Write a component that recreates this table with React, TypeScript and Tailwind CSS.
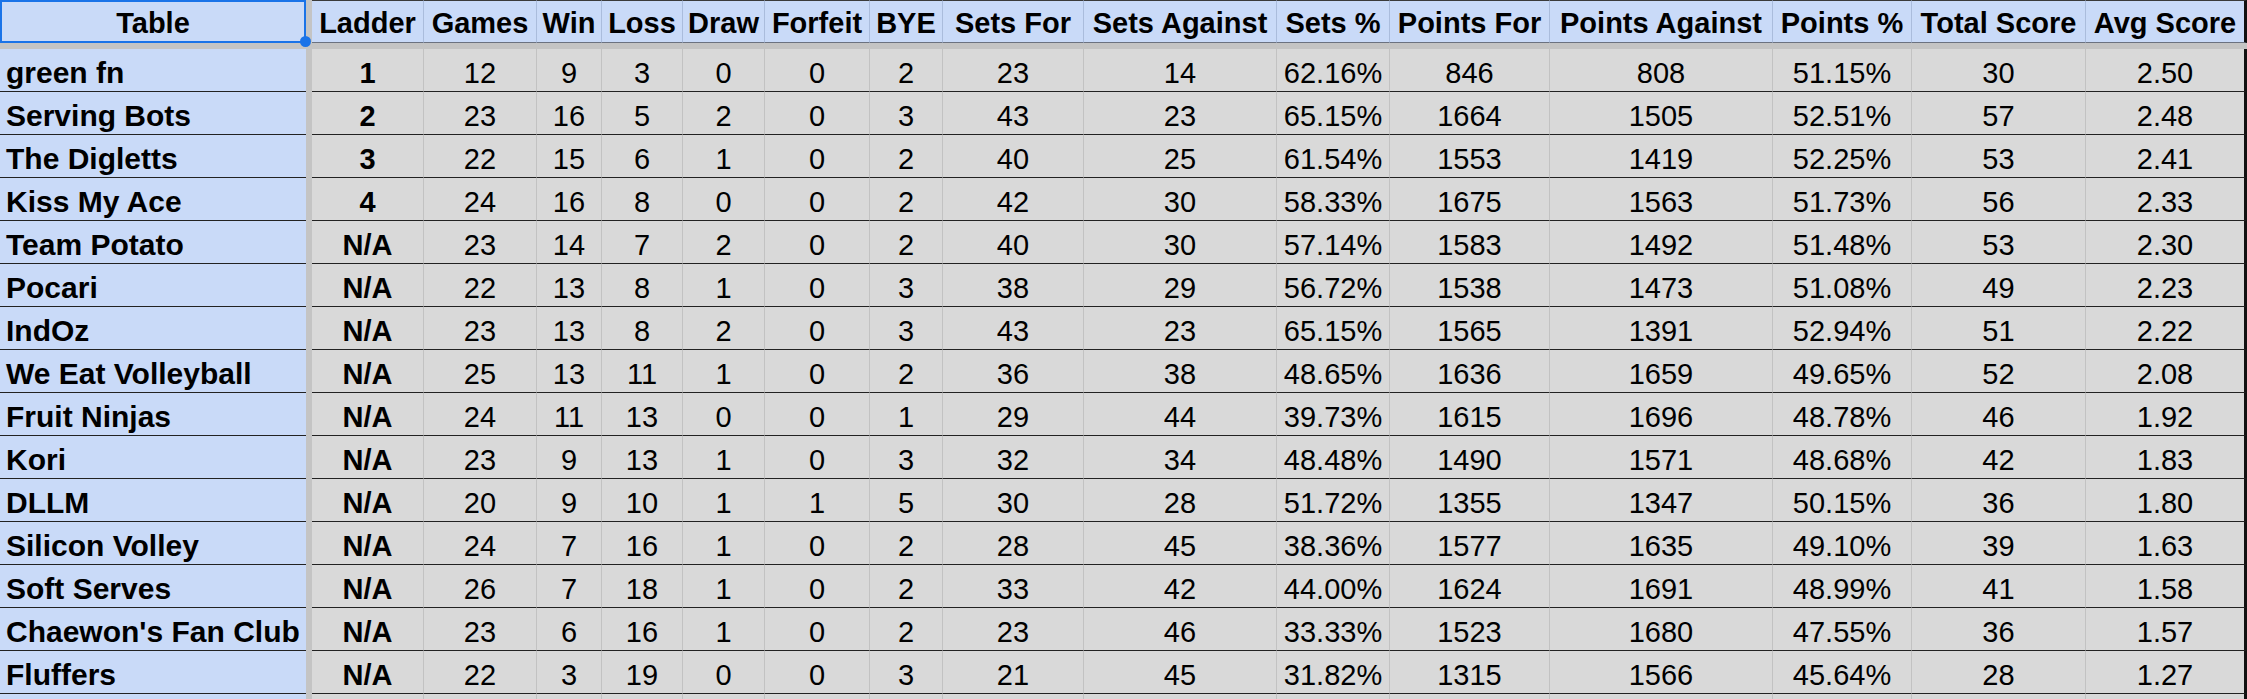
import React from "react";

const COLS =
  "grid grid-cols-[306px_6px_112px_113px_65px_81px_82px_105px_73px_141px_193px_113px_160px_223px_139px_174px_161px]";

const HEADERS = [
  "Ladder",
  "Games",
  "Win",
  "Loss",
  "Draw",
  "Forfeit",
  "BYE",
  "Sets For",
  "Sets Against",
  "Sets %",
  "Points For",
  "Points Against",
  "Points %",
  "Total Score",
  "Avg Score",
];

const ROWS: string[][] = [
  ["green fn", "1", "12", "9", "3", "0", "0", "2", "23", "14", "62.16%", "846", "808", "51.15%", "30", "2.50"],
  ["Serving Bots", "2", "23", "16", "5", "2", "0", "3", "43", "23", "65.15%", "1664", "1505", "52.51%", "57", "2.48"],
  ["The Digletts", "3", "22", "15", "6", "1", "0", "2", "40", "25", "61.54%", "1553", "1419", "52.25%", "53", "2.41"],
  ["Kiss My Ace", "4", "24", "16", "8", "0", "0", "2", "42", "30", "58.33%", "1675", "1563", "51.73%", "56", "2.33"],
  ["Team Potato", "N/A", "23", "14", "7", "2", "0", "2", "40", "30", "57.14%", "1583", "1492", "51.48%", "53", "2.30"],
  ["Pocari", "N/A", "22", "13", "8", "1", "0", "3", "38", "29", "56.72%", "1538", "1473", "51.08%", "49", "2.23"],
  ["IndOz", "N/A", "23", "13", "8", "2", "0", "3", "43", "23", "65.15%", "1565", "1391", "52.94%", "51", "2.22"],
  ["We Eat Volleyball", "N/A", "25", "13", "11", "1", "0", "2", "36", "38", "48.65%", "1636", "1659", "49.65%", "52", "2.08"],
  ["Fruit Ninjas", "N/A", "24", "11", "13", "0", "0", "1", "29", "44", "39.73%", "1615", "1696", "48.78%", "46", "1.92"],
  ["Kori", "N/A", "23", "9", "13", "1", "0", "3", "32", "34", "48.48%", "1490", "1571", "48.68%", "42", "1.83"],
  ["DLLM", "N/A", "20", "9", "10", "1", "1", "5", "30", "28", "51.72%", "1355", "1347", "50.15%", "36", "1.80"],
  ["Silicon Volley", "N/A", "24", "7", "16", "1", "0", "2", "28", "45", "38.36%", "1577", "1635", "49.10%", "39", "1.63"],
  ["Soft Serves", "N/A", "26", "7", "18", "1", "0", "2", "33", "42", "44.00%", "1624", "1691", "48.99%", "41", "1.58"],
  ["Chaewon's Fan Club", "N/A", "23", "6", "16", "1", "0", "2", "23", "46", "33.33%", "1523", "1680", "47.55%", "36", "1.57"],
  ["Fluffers", "N/A", "22", "3", "19", "0", "0", "3", "21", "45", "31.82%", "1315", "1566", "45.64%", "28", "1.27"],
];

function HeaderRow() {
  return (
    <div className={`${COLS} h-[43px]`}>
      <div className="relative h-[43px] border-2 border-[#1a73e8] bg-[#c9daf8] font-bold text-center leading-[29px] pt-[7px] whitespace-nowrap">
        Table
        <div className="absolute -right-[7px] -bottom-[6px] z-10 h-[11px] w-[11px] rounded-full bg-[#1a73e8]" />
      </div>
      <div className="bg-[#c4c4c4]" />
      {HEADERS.map((h, i) => (
        <div
          key={h}
          className={`h-[43px] bg-[#c9daf8] border-t border-t-[#3a3a3a] border-b border-b-[#6b7280] font-bold text-center leading-[29px] pt-[8px] whitespace-nowrap ${
            i === HEADERS.length - 1
              ? "border-r-[3px] border-r-[#111]"
              : "border-r border-r-[#aabcdc]"
          }`}
        >
          {h}
        </div>
      ))}
    </div>
  );
}

function BodyRow({ row }: { row: string[] }) {
  const [name, ...vals] = row;
  return (
    <div className={`${COLS} h-[43px]`}>
      <div className="h-[43px] bg-[#c9daf8] border-b border-b-[#222] font-bold text-[30px] pl-[6px] leading-[30px] pt-[9px] whitespace-nowrap">
        {name}
      </div>
      <div className="bg-[#c4c4c4]" />
      {vals.map((v, i) => (
        <div
          key={i}
          className={`h-[43px] bg-[#d9d9d9] border-b border-b-[#222] text-center leading-[29px] pt-[10px] whitespace-nowrap ${
            i === 0 ? "font-bold" : ""
          } ${
            i === vals.length - 1
              ? "border-r-[3px] border-r-[#111]"
              : "border-r border-r-[#c2c2c2]"
          }`}
        >
          {v}
        </div>
      ))}
    </div>
  );
}

export default function App() {
  return (
    <div className="h-[699px] w-[2247px] overflow-hidden bg-white font-['Liberation_Sans',Arial,sans-serif] text-[29px] text-black">
      <HeaderRow />
      <div className="h-[6px] w-[2247px] bg-[#c4c4c4]" />
      {ROWS.map((r) => (
        <BodyRow key={r[0]} row={r} />
      ))}
      <div className={`${COLS} h-[43px]`}>
        <div className="bg-[#c9daf8]" />
        <div className="bg-[#c4c4c4]" />
        {HEADERS.map((h, i) => (
          <div
            key={h}
            className={`bg-[#d9d9d9] ${
              i === HEADERS.length - 1
                ? "border-r-[3px] border-r-[#111]"
                : "border-r border-r-[#c2c2c2]"
            }`}
          />
        ))}
      </div>
    </div>
  );
}
